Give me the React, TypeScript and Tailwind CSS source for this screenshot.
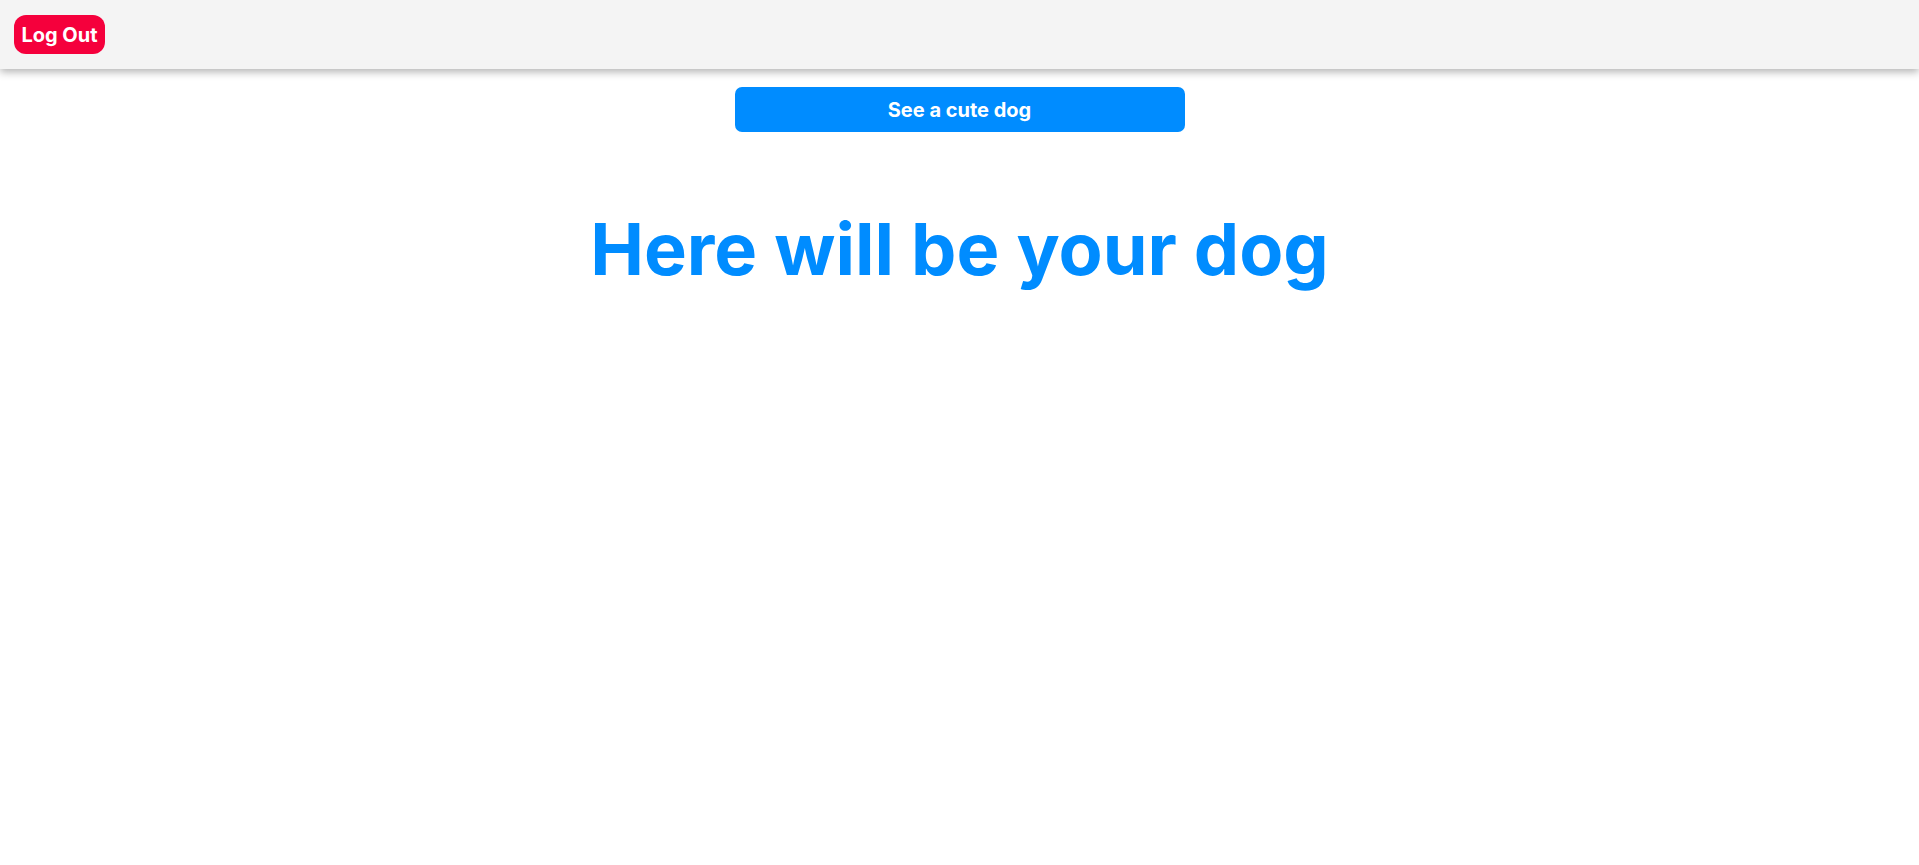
export default function App() {
  return (
    <div className="min-h-screen bg-white font-['Inter',sans-serif]">
      <header className="h-[69px] bg-[#f4f4f4] shadow-[0_3px_8px_rgba(0,0,0,0.3)] flex items-center px-[14px]">
        <button className="h-[39px] w-[91px] rounded-[12px] bg-[#f5003c] text-white text-[20px] font-bold leading-none">
          Log Out
        </button>
      </header>
      <main className="flex flex-col items-center pt-[18px]">
        <button className="h-[45px] w-[450px] rounded-[7px] bg-[#008cff] text-white text-[20px] font-bold leading-none">
          See a cute dog
        </button>
        <h1 className="mt-[73px] text-[72px] font-bold leading-[87px] text-[#008cff]">
          Here will be your dog
        </h1>
      </main>
    </div>
  );
}
